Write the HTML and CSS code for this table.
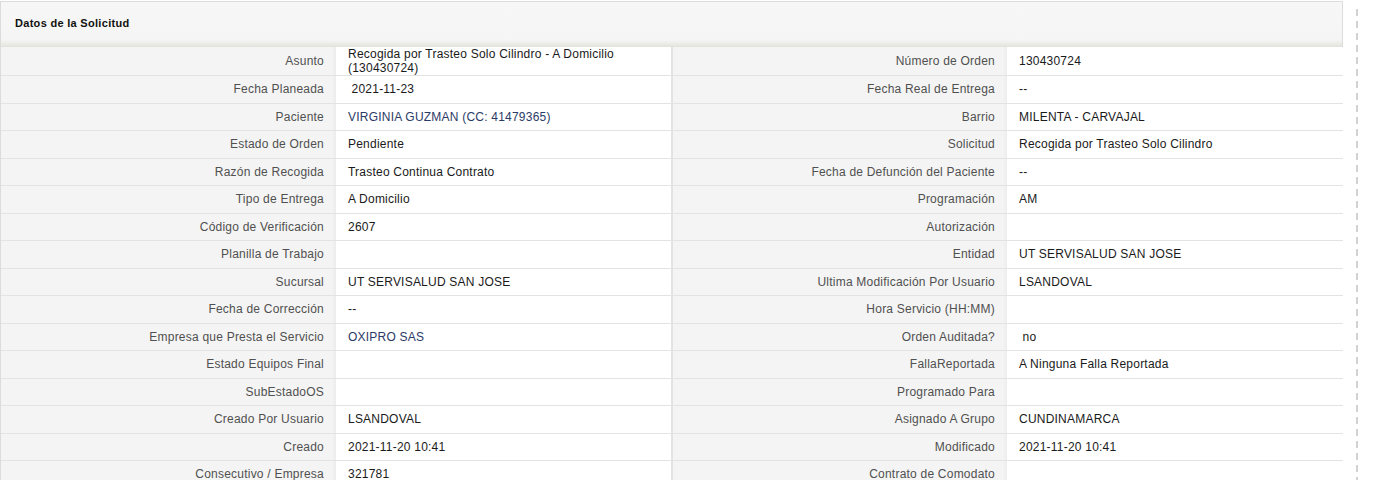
FILE: index.html
```html
<!DOCTYPE html>
<html lang="es">
<head>
<meta charset="utf-8">
<title>Datos de la Solicitud</title>
<link rel="stylesheet" href="styles.css">
</head>
<body>
<div class="page">
  <section class="panel">
    <header class="panel-head">Datos de la Solicitud</header>
    <table class="data">
      <colgroup><col class="c-l"><col class="c-v"><col class="c-l"><col class="c-v"></colgroup>
      <tbody>
        <tr><td class="lbl">Asunto</td><td class="val">Recogida por Trasteo Solo Cilindro - A Domicilio<br>(130430724)</td><td class="lbl lbl2">Número de Orden</td><td class="val">130430724</td></tr>
        <tr><td class="lbl">Fecha Planeada</td><td class="val">&nbsp;2021-11-23</td><td class="lbl lbl2">Fecha Real de Entrega</td><td class="val">--</td></tr>
        <tr><td class="lbl">Paciente</td><td class="val link">VIRGINIA GUZMAN (CC: 41479365)</td><td class="lbl lbl2">Barrio</td><td class="val">MILENTA - CARVAJAL</td></tr>
        <tr><td class="lbl">Estado de Orden</td><td class="val">Pendiente</td><td class="lbl lbl2">Solicitud</td><td class="val">Recogida por Trasteo Solo Cilindro</td></tr>
        <tr><td class="lbl">Razón de Recogida</td><td class="val">Trasteo Continua Contrato</td><td class="lbl lbl2">Fecha de Defunción del Paciente</td><td class="val">--</td></tr>
        <tr><td class="lbl">Tipo de Entrega</td><td class="val">A Domicilio</td><td class="lbl lbl2">Programación</td><td class="val">AM</td></tr>
        <tr><td class="lbl">Código de Verificación</td><td class="val">2607</td><td class="lbl lbl2">Autorización</td><td class="val"></td></tr>
        <tr><td class="lbl">Planilla de Trabajo</td><td class="val"></td><td class="lbl lbl2">Entidad</td><td class="val">UT SERVISALUD SAN JOSE</td></tr>
        <tr><td class="lbl">Sucursal</td><td class="val">UT SERVISALUD SAN JOSE</td><td class="lbl lbl2">Ultima Modificación Por Usuario</td><td class="val">LSANDOVAL</td></tr>
        <tr><td class="lbl">Fecha de Corrección</td><td class="val">--</td><td class="lbl lbl2">Hora Servicio (HH:MM)</td><td class="val"></td></tr>
        <tr><td class="lbl">Empresa que Presta el Servicio</td><td class="val link">OXIPRO SAS</td><td class="lbl lbl2">Orden Auditada?</td><td class="val">&nbsp;no</td></tr>
        <tr><td class="lbl">Estado Equipos Final</td><td class="val"></td><td class="lbl lbl2">FallaReportada</td><td class="val">A Ninguna Falla Reportada</td></tr>
        <tr><td class="lbl">SubEstadoOS</td><td class="val"></td><td class="lbl lbl2">Programado Para</td><td class="val"></td></tr>
        <tr><td class="lbl">Creado Por Usuario</td><td class="val">LSANDOVAL</td><td class="lbl lbl2">Asignado A Grupo</td><td class="val">CUNDINAMARCA</td></tr>
        <tr><td class="lbl">Creado</td><td class="val">2021-11-20 10:41</td><td class="lbl lbl2">Modificado</td><td class="val">2021-11-20 10:41</td></tr>
        <tr><td class="lbl">Consecutivo / Empresa</td><td class="val">321781</td><td class="lbl lbl2">Contrato de Comodato</td><td class="val"></td></tr>
      </tbody>
    </table>
  </section>
  <div class="divider"></div>
</div>
</body>
</html>
```
FILE: styles.css
```css
html, body {
  margin: 0;
  padding: 0;
  background: #ffffff;
  overflow: hidden;
}
body {
  font-family: "Liberation Sans", Arial, sans-serif;
  font-size: 12px;
  letter-spacing: 0.22px;
  color: #222;
}
.page {
  display: flex;
  align-items: stretch;
  height: 480px;
  padding-top: 1px;
  box-sizing: border-box;
}
.panel {
  width: 1343px;
  flex: none;
  border-left: 1px solid #dcdcdc;
  border-right: 1px solid #dcdcdc;
  border-top: 1px solid #dcdcdc;
  box-sizing: border-box;
}
.panel-head {
  height: 45px;
  box-sizing: border-box;
  padding-left: 14px;
  padding-bottom: 4px;
  display: flex;
  align-items: center;
  font-weight: bold;
  font-size: 11px;
  letter-spacing: 0.3px;
  color: #111;
  background: linear-gradient(to bottom, #f7f7f7 0, #f5f5f5 38px, #ebebe6 42px, #e2e2dc 45px);
}
.data {
  width: 100%;
  border-collapse: collapse;
  table-layout: fixed;
}
.c-l { width: 335px; }
.c-v { width: 336px; }
.data td {
  height: 26.5px;
  padding: 0 12px;
  border-bottom: 1px solid #e3e3e3;
  line-height: 14px;
  vertical-align: middle;
  white-space: nowrap;
  overflow: hidden;
}
.data td.lbl {
  text-align: right;
  color: #505050;
  background: linear-gradient(to right, #f4f4f4 0, #f4f4f4 calc(100% - 4px), #ececec 100%);
}
.data td.lbl2 {
  border-left: 2px solid #e3e3e3;
}
.data td.val {
  color: #1a1a1a;
  background: #fff;
  white-space: normal;
}
.data td.link {
  color: #2b3b66;
}
.divider {
  width: 2px;
  margin-left: 13px;
  margin-top: 8px;
  align-self: stretch;
  background: repeating-linear-gradient(to bottom, #d2d2d2 0, #d2d2d2 7px, transparent 7px, transparent 12px);
}
```
